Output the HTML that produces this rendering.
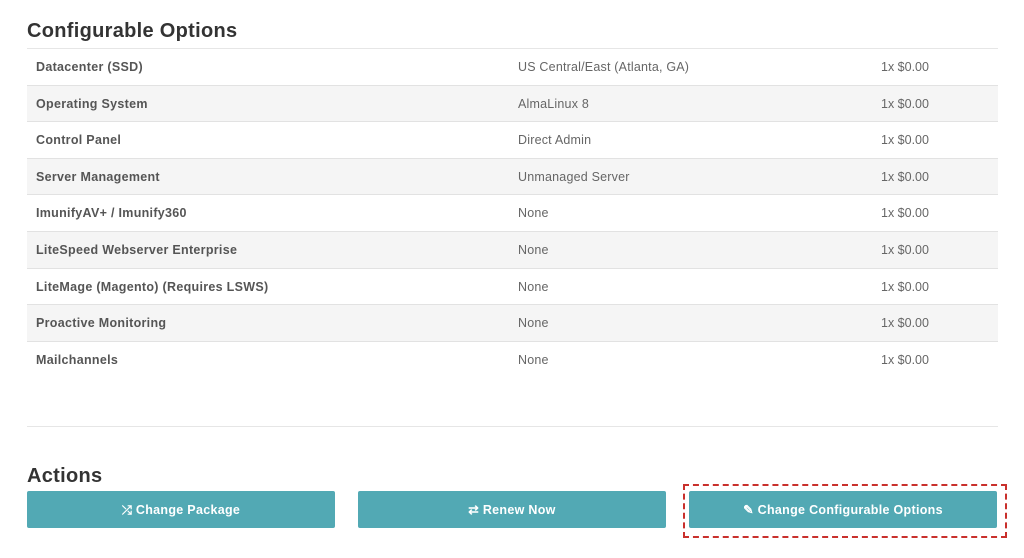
<!DOCTYPE html>
<html><head><style>
body{margin:0;background:#fff;font-family:"Liberation Sans",sans-serif;width:1024px;height:558px;position:relative;overflow:hidden}
h2{position:absolute;left:27px;margin:0;font-size:20px;font-weight:bold;color:#333;letter-spacing:0.3px}
.t{position:absolute;left:27px;top:48px;width:971px;border-top:1px solid #e6e6e6}
.r{height:35.6px;border-bottom:1px solid #e2e2e2;position:relative;font-size:12.5px;color:#666}
.r:nth-child(even){background:#f5f5f5}
.r span{position:absolute;top:11px}
.a{left:9px;font-weight:bold;color:#555;letter-spacing:0.3px}.b{left:491px;letter-spacing:0.2px}.c{left:854px}
.btn{position:absolute;top:491px;height:37px;width:308px;background:#52a9b4;border-radius:2px;color:#fff;font-weight:bold;font-size:12.5px;text-align:center;line-height:38px;letter-spacing:0.3px}
</style></head><body>
<h2 style="top:20px">Configurable Options</h2>
<div class="t">
<div class="r"><span class="a">Datacenter (SSD)</span><span class="b">US Central/East (Atlanta, GA)</span><span class="c">1x $0.00</span></div>
<div class="r"><span class="a">Operating System</span><span class="b">AlmaLinux 8</span><span class="c">1x $0.00</span></div>
<div class="r"><span class="a">Control Panel</span><span class="b">Direct Admin</span><span class="c">1x $0.00</span></div>
<div class="r"><span class="a">Server Management</span><span class="b">Unmanaged Server</span><span class="c">1x $0.00</span></div>
<div class="r"><span class="a">ImunifyAV+ / Imunify360</span><span class="b">None</span><span class="c">1x $0.00</span></div>
<div class="r"><span class="a">LiteSpeed Webserver Enterprise</span><span class="b">None</span><span class="c">1x $0.00</span></div>
<div class="r"><span class="a">LiteMage (Magento) (Requires LSWS)</span><span class="b">None</span><span class="c">1x $0.00</span></div>
<div class="r"><span class="a">Proactive Monitoring</span><span class="b">None</span><span class="c">1x $0.00</span></div>
<div class="r" style="border-bottom:none"><span class="a">Mailchannels</span><span class="b">None</span><span class="c">1x $0.00</span></div>
</div>
<div style="position:absolute;left:27px;top:426px;width:971px;border-top:1px solid #e6e6e6"></div>
<h2 style="top:465px">Actions</h2>
<div class="btn" style="left:27px">⤮ Change Package</div>
<div class="btn" style="left:358px">⇄ Renew Now</div>
<div class="btn" style="left:689px">✎ Change Configurable Options</div>
<div style="position:absolute;left:683px;top:484px;width:320px;height:50px;border:2px dashed #c9302c"></div>
</body></html>
